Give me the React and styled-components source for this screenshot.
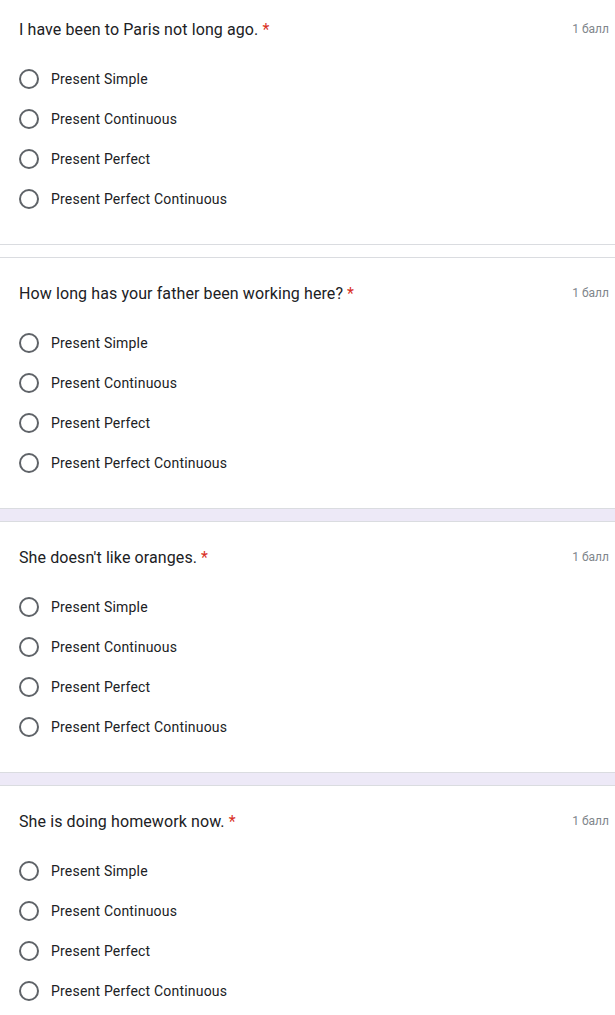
import React from "react";
import styled, { createGlobalStyle } from "styled-components";

const GlobalStyle = createGlobalStyle`
  body {
    margin: 0;
    background: #ffffff;
    font-family: Roboto, "Liberation Sans", Arial, sans-serif;
  }
`;

const Page = styled.div`
  width: 615px;
  margin-top: -6px;
  overflow: hidden;
`;

const Card = styled.section`
  background: #ffffff;
  border-top: ${(p) => (p.$first ? "none" : "1px solid #dadce0")};
  border-bottom: 1px solid #dadce0;
  padding: 24px 6px 25px 19px;
`;

const Gap = styled.div`
  height: 12px;
  background: ${(p) => (p.$tinted ? "#ede9f7" : "#ffffff")};
`;

const Header = styled.div`
  display: flex;
  align-items: center;
  justify-content: space-between;
  height: 22px;
  margin-bottom: 19px;
`;

const Title = styled.div`
  font-size: 16px;
  letter-spacing: 0.1px;
  color: #202124;
`;

const Required = styled.span`
  color: #d93025;
  margin-left: 4px;
`;

const Points = styled.div`
  font-size: 12px;
  color: #80868b;
`;

const Options = styled.div`
  display: flex;
  flex-direction: column;
`;

const Option = styled.label`
  display: flex;
  align-items: center;
  height: 40px;
  gap: 12px;
  font-size: 14px;
  letter-spacing: 0.2px;
  color: #202124;
`;

const Radio = styled.span`
  width: 16px;
  height: 16px;
  border: 2px solid #5f6368;
  border-radius: 50%;
  flex-shrink: 0;
`;

const choices = [
  "Present Simple",
  "Present Continuous",
  "Present Perfect",
  "Present Perfect Continuous",
];

const questions = [
  "I have been to Paris not long ago.",
  "How long has your father been working here?",
  "She doesn't like oranges.",
  "She is doing homework now.",
];

export default function App() {
  return (
    <>
      <GlobalStyle />
      <Page>
        {questions.map((q, i) => (
          <React.Fragment key={i}>
            {i > 0 && <Gap $tinted={i > 1} />}
            <Card $first={i === 0}>
              <Header>
                <Title>
                  {q}
                  <Required>*</Required>
                </Title>
                <Points>1 балл</Points>
              </Header>
              <Options>
                {choices.map((c) => (
                  <Option key={c}>
                    <Radio />
                    {c}
                  </Option>
                ))}
              </Options>
            </Card>
          </React.Fragment>
        ))}
      </Page>
    </>
  );
}
